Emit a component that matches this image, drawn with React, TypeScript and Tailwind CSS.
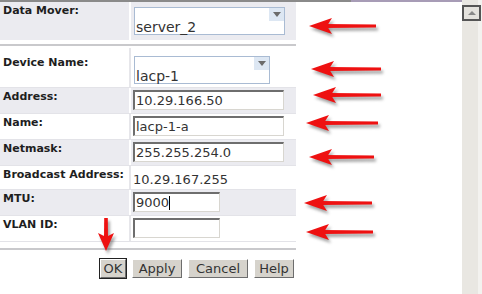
import React from "react";

// red annotation arrows drawn on top of the form
type Arrow = { tip: number; tail: number; y: number };

const leftArrows: Arrow[] = [
  { tip: 309, tail: 376, y: 26 },
  { tip: 311, tail: 381, y: 69 },
  { tip: 313, tail: 381, y: 95 },
  { tip: 306, tail: 378, y: 123 },
  { tip: 309, tail: 374, y: 157 },
  { tip: 304, tail: 372, y: 203 },
  { tip: 306, tail: 373, y: 232 },
];

function LeftArrow({ tip, tail, y }: Arrow) {
  const head = `M${tip} ${y} L${tip + 23} ${y - 8} L${tip + 18} ${y} L${tip + 23} ${y + 8} Z`;
  const shaft = `M${tip + 16} ${y - 2} L${tail} ${y - 1.5} L${tail} ${y + 1.5} L${tip + 16} ${y + 2} Z`;
  return (
    <g>
      <g transform="translate(2 3)" fill="#555" opacity="0.55" filter="url(#blur)">
        <path d={head} />
        <path d={shaft} />
      </g>
      <g fill="#ee1111">
        <path d={head} />
        <path d={shaft} />
      </g>
    </g>
  );
}

function DownArrow() {
  const x = 106;
  const head = `M${x} 251 L${x - 8} 233 L${x} 237 L${x + 8} 233 Z`;
  const shaft = `M${x - 1.8} 218 L${x + 1.8} 218 L${x + 2} 238 L${x - 2} 238 Z`;
  return (
    <g>
      <g transform="translate(2 3)" fill="#555" opacity="0.55" filter="url(#blur)">
        <path d={head} />
        <path d={shaft} />
      </g>
      <g fill="#ee1111">
        <path d={head} />
        <path d={shaft} />
      </g>
    </g>
  );
}

function SelectBox({ value, width }: { value: string; width: string }) {
  return (
    <div className={`${width} h-[28px] border border-[#a9bbd3] bg-white flex flex-col`}>
      <div className="flex justify-end">
        <div className="w-[15px] h-[13px] bg-[#dde7f3] flex items-center justify-center">
          <div className="w-0 h-0 border-l-[4px] border-r-[4px] border-t-[5px] border-l-transparent border-r-transparent border-t-[#6b6b6b]" />
        </div>
      </div>
      <div className="pl-[1px] text-[14px] leading-[13px] text-[#333]">{value}</div>
    </div>
  );
}

function TextInput({ value, width }: { value: string; width: string }) {
  return (
    <div
      className={`${width} h-[20px] bg-white border-t-2 border-l-2 border-b border-r border-t-[#6e6e6e] border-l-[#6e6e6e] border-b-[#d8d6d0] border-r-[#d8d6d0] pl-[1px] text-[13px] leading-[17px] text-[#333] whitespace-nowrap overflow-hidden`}
    >
      {value}
    </div>
  );
}

type Row = { label: string; h: string; gray: boolean; field: React.ReactNode };

const rows: Row[] = [
  { label: "Address:", h: "h-[26px]", gray: true, field: <TextInput value="10.29.166.50" width="w-[151px]" /> },
  { label: "Name:", h: "h-[26px]", gray: false, field: <TextInput value="lacp-1-a" width="w-[151px]" /> },
  { label: "Netmask:", h: "h-[26px]", gray: true, field: <TextInput value="255.255.254.0" width="w-[151px]" /> },
  {
    label: "Broadcast Address:",
    h: "h-[24px]",
    gray: false,
    field: <div className="pt-[3px] text-[13px] leading-[17px] text-[#333]">10.29.167.255</div>,
  },
  {
    label: "MTU:",
    h: "h-[26px]",
    gray: true,
    field: (
      <div className="w-[87px] h-[20px] bg-white border-t-2 border-l-2 border-b border-r border-t-[#6e6e6e] border-l-[#6e6e6e] border-b-[#d8d6d0] border-r-[#d8d6d0] pl-[1px] text-[13px] leading-[17px] text-[#333] flex items-center">
        9000<span className="inline-block w-[1px] h-[14px] bg-black" />
      </div>
    ),
  },
  { label: "VLAN ID:", h: "h-[26px]", gray: false, field: <TextInput value="" width="w-[87px]" /> },
];

function FormRow({ label, h, gray, field }: Row) {
  const bg = gray ? "bg-[#ebebf0]" : "bg-white";
  return (
    <div className={`flex ${h} border-b border-[#e3e3e8]`}>
      <div className={`w-[129px] ${bg} pl-[3px] pt-[2px] text-[11px] leading-[13px] font-bold text-[#1e1e1e] whitespace-nowrap`}>{label}</div>
      <div className={`flex-1 ${bg} border-l-2 ${gray ? "border-white" : "border-[#e6e6ea]"} pl-[2px] pt-[2px]`}>{field}</div>
    </div>
  );
}

function Btn({ label, w, focused }: { label: string; w: string; focused?: boolean }) {
  return (
    <div className={`${w} h-[21px] ${focused ? "border border-[#222]" : "border border-transparent"}`}>
      <div className="h-full border-t border-l border-b border-r border-t-white border-l-white border-b-[#6d6d6d] border-r-[#6d6d6d] bg-[#d6d3cc] flex items-center justify-center text-[13px] text-[#333]">
        {label}
      </div>
    </div>
  );
}

export default function App() {
  return (
    <div
      className="relative w-[482px] h-[294px] bg-white overflow-hidden flex"
      style={{ fontFamily: '"DejaVu Sans", Verdana, sans-serif' }}
    >
      <div className="w-[462px] flex flex-col">
        <div className="h-[2px] flex">
          <div className="w-[351px] bg-[#8a8a8a]" />
          <div className="flex-1 bg-[#a79cb6]" />
        </div>
        <div className="w-[296px] flex flex-col">
          {/* data mover */}
          <div className="flex h-[38px]">
            <div className="w-[129px] bg-[#ebebf0] pl-[3px] pt-[2px] text-[11px] leading-[13px] font-bold text-[#1e1e1e] whitespace-nowrap">
              Data Mover:
            </div>
            <div className="flex-1 bg-[#ebebf0] border-l-2 border-white pl-[3px] pt-[5px]">
              <SelectBox value="server_2" width="w-[151px]" />
            </div>
          </div>
          <div className="h-[4px]" />
          <div className="h-[2px] bg-[#c9c9cc]" />
          <div className="h-[2px]" />

          {/* interface */}
          <div className="flex h-[40px] border-b border-[#e3e3e8]">
            <div className="w-[129px] bg-white pl-[3px] pt-[8px] text-[11px] leading-[13px] font-bold text-[#1e1e1e] whitespace-nowrap">
              Device Name:
            </div>
            <div className="flex-1 bg-white border-l-2 border-[#e6e6ea] pl-[3px] pt-[8px]">
              <SelectBox value="lacp-1" width="w-[136px]" />
            </div>
          </div>
          {rows.map((r) => (
            <FormRow key={r.label} {...r} />
          ))}
          <div className="h-[6px]" />
          <div className="h-[2px] bg-[#c9c9cc]" />

          <div className="flex justify-end gap-[4px] pt-[8px] pr-[1px]">
            <Btn label="OK" w="w-[28px]" focused />
            <Btn label="Apply" w="w-[52px]" />
            <Btn label="Cancel" w="w-[62px]" />
            <Btn label="Help" w="w-[42px]" />
          </div>
        </div>
      </div>

      {/* scrollbar */}
      <div className="w-[20px] flex flex-col pt-[3px] bg-[#e9e7e2] border-r-[4px] border-[#f3f2ef]">
        <div className="mt-[2px] w-[19px] h-[16px] border-2 border-[#555] bg-[#e4e2dd] flex items-center justify-center">
          <div className="w-0 h-0 border-l-[4px] border-r-[4px] border-b-[4px] border-l-transparent border-r-transparent border-b-[#888]" />
        </div>
      </div>

      <svg className="absolute inset-0 pointer-events-none" width="482" height="294">
        <defs>
          <filter id="blur" x="-20%" y="-50%" width="140%" height="200%">
            <feGaussianBlur stdDeviation="1.5" />
          </filter>
        </defs>
        {leftArrows.map((a) => (
          <LeftArrow key={a.y} {...a} />
        ))}
        <DownArrow />
      </svg>
    </div>
  );
}
